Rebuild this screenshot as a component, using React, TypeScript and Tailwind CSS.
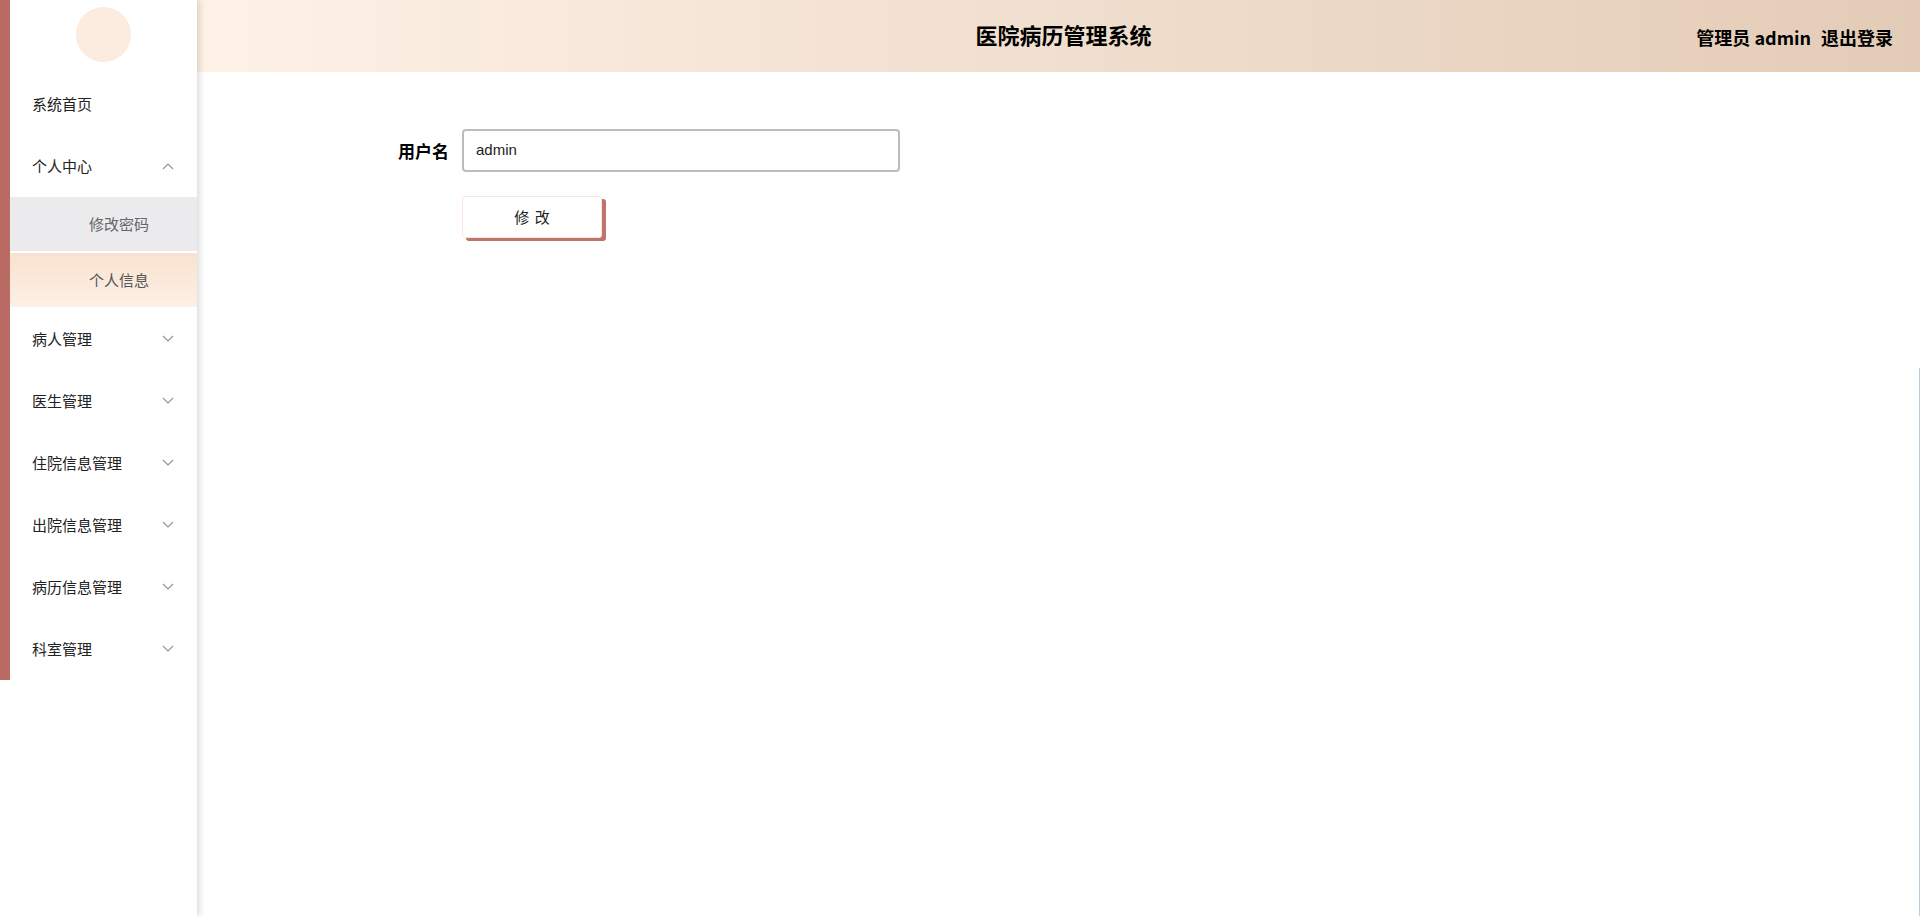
import React from "react";

const Chevron = ({ up }: { up?: boolean }) => (
  <svg width="12" height="8" viewBox="0 0 12 8" className="text-[#909399]">
    {up ? (
      <polyline points="1,7 6,2 11,7" fill="none" stroke="currentColor" strokeWidth="1.1" />
    ) : (
      <polyline points="1,1 6,6 11,1" fill="none" stroke="currentColor" strokeWidth="1.1" />
    )}
  </svg>
);

const MenuItem = ({ label, arrow }: { label: string; arrow?: "up" | "down" }) => (
  <div className="h-[62px] flex items-center justify-between pl-[22px] pr-[23px] text-[15px] text-[#222]">
    <span>{label}</span>
    {arrow && <Chevron up={arrow === "up"} />}
  </div>
);

export default function App() {
  const font = { fontFamily: '"Noto Sans CJK SC", "Noto Sans", sans-serif' };
  return (
    <div className="flex h-[916px] w-full bg-white overflow-hidden relative" style={font}>
      <aside className="w-[197px] h-full bg-white relative z-10 shadow-[3px_0_6px_rgba(0,0,0,0.13)] shrink-0">
        <div className="border-l-[10px] border-[#b96b64]">
          <div className="h-[73px] flex items-center justify-center">
            <div className="w-[55px] h-[55px] rounded-full bg-[#fcebdf] mb-[5px]" />
          </div>
          <MenuItem label="系统首页" />
          <MenuItem label="个人中心" arrow="up" />
          <div className="flex flex-col gap-[2px] pb-[1px]">
            <div className="h-[54px] bg-[#ebebed] flex items-center pl-[79px] text-[15px] text-[#666]">修改密码</div>
            <div className="h-[54px] bg-gradient-to-b from-[#f8e2cf] to-[#fdf0e6] flex items-center pl-[79px] text-[15px] text-[#555]">个人信息</div>
          </div>
          <MenuItem label="病人管理" arrow="down" />
          <MenuItem label="医生管理" arrow="down" />
          <MenuItem label="住院信息管理" arrow="down" />
          <MenuItem label="出院信息管理" arrow="down" />
          <MenuItem label="病历信息管理" arrow="down" />
          <MenuItem label="科室管理" arrow="down" />
        </div>
      </aside>
      <main className="flex-1 flex flex-col">
        <header className="h-[72px] bg-gradient-to-r from-[#fef1e6] to-[#e3ccb7] relative flex items-center justify-center shrink-0">
          <h1 className="text-[22px] font-bold text-black pb-[3px] pl-[10px]">医院病历管理系统</h1>
          <div className="absolute right-[27px] top-[24px] text-[18px] font-bold text-black flex gap-[10px]">
            <span>管理员 admin</span>
            <span>退出登录</span>
          </div>
        </header>
        <div className="pt-[57px] pl-[193px]">
          <div className="flex items-center h-[43px]">
            <label className="w-[72px] text-right pr-[13px] text-[17px] font-bold text-black whitespace-nowrap">用户名</label>
            <div className="w-[438px] h-[43px] border-2 border-[#bcbcbc] rounded-[4px] flex items-center pl-[12px] text-[15px] text-[#222]" style={{ fontFamily: '"Liberation Sans", Arial, sans-serif' }}>
              admin
            </div>
          </div>
          <div className="pl-[72px] mt-[24px]">
            <button className="w-[140px] h-[42px] bg-white border border-[#fbe6dc] rounded-[3px] shadow-[4px_3px_0_#c0756c] text-[15px] text-[#222] tracking-[1px] pl-[1px]">
              修 改
            </button>
          </div>
        </div>
      </main>
      <div className="absolute right-0 top-[368px] bottom-0 w-[1px] bg-[#b7d0dc]" />
    </div>
  );
}
